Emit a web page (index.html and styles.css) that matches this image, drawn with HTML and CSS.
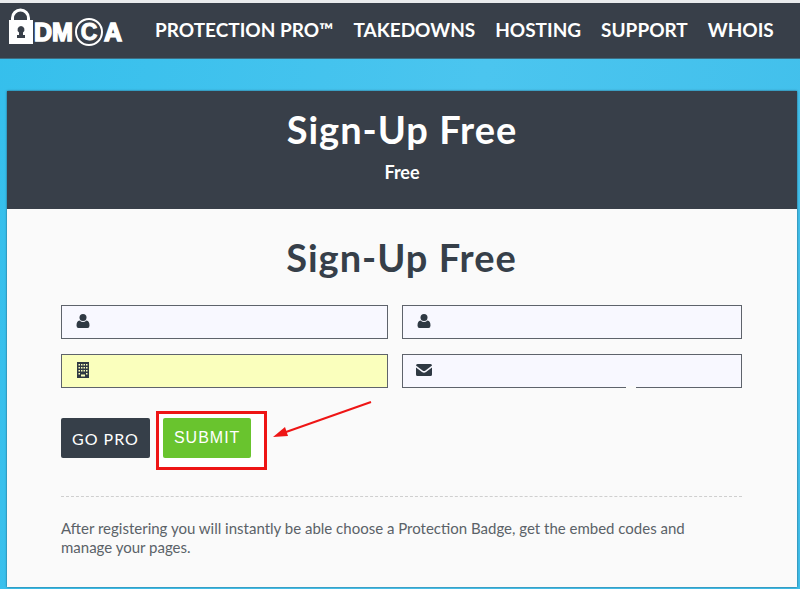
FILE: index.html
```
<!DOCTYPE html>
<html lang="en">

<head>
    <meta charset="utf-8">
    <meta name="viewport" content="width=device-width, initial-scale=1">
    <title>DMCA - Sign-Up Free</title>
    <link rel="stylesheet" href="styles.css">
</head>

<body>
    <header class="topbar">
        <a class="logo" href="#" aria-label="DMCA home">
            <svg width="116" height="40" viewBox="0 2 116 40">
                <path class="logo_shackle" d="M4.500 12V10A8 8 0 0 1 20.500 10V12" />
                <path class="logo_lock" fill-rule="evenodd" d="M1 12H25V36H1ZM13 18A3.600 3.600 0 0 0 11 24.500V27H9V30H17V27H15V24.500A3.600 3.600 0 0 0 13 18Z" />
                <text class="logo_text" x="26" y="33">DM</text>
                <circle class="logo_ring" cx="81" cy="24" r="13" />
                <text class="logo_c" x="81" y="32" text-anchor="middle">C</text>
                <text class="logo_text" x="96" y="33">A</text>
            </svg>
        </a>
        <nav class="menu">
            <a href="#">PROTECTION PRO™</a>
            <a href="#">TAKEDOWNS</a>
            <a href="#">HOSTING</a>
            <a href="#">SUPPORT</a>
            <a href="#">WHOIS</a>
        </nav>
    </header>

    <main class="card">
        <div class="card_head">
            <h1 class="title">Sign-Up Free</h1>
            <p class="plan">Free</p>
        </div>
        <div class="card_body">
            <h2 class="title">Sign-Up Free</h2>
            <form>
                <div class="fields">
                    <label class="field">
                        <svg class="icon" viewBox="0 0 16 16">
                            <circle cx="8" cy="4.500" r="3.500" />
                            <path d="M4.500 7.500Q8 10.500 11.500 7.500Q14.500 8 14.500 12.500Q14.500 15 12.500 15H3.500Q1.500 15 1.500 12.500Q1.500 8 4.500 7.500Z" />
                        </svg>
                        <input type="text" name="first_name" aria-label="First name">
                    </label>
                    <label class="field">
                        <svg class="icon" viewBox="0 0 16 16">
                            <circle cx="8" cy="4.500" r="3.500" />
                            <path d="M4.500 7.500Q8 10.500 11.500 7.500Q14.500 8 14.500 12.500Q14.500 15 12.500 15H3.500Q1.500 15 1.500 12.500Q1.500 8 4.500 7.500Z" />
                        </svg>
                        <input type="text" name="last_name" aria-label="Last name">
                    </label>
                    <label class="field field_filled">
                        <svg class="icon" viewBox="0 0 16 16">
                            <path fill-rule="evenodd" d="M2 0H14V16H2ZM3.500 2V3.500H5V2ZM6 2V3.500H7.500V2ZM8.500 2V3.500H10V2ZM11 2V3.500H12.500V2ZM3.500 5V6.500H5V5ZM6 5V6.500H7.500V5ZM8.500 5V6.500H10V5ZM11 5V6.500H12.500V5ZM3.500 8V9.500H5V8ZM6 8V9.500H7.500V8ZM8.500 8V9.500H10V8ZM11 8V9.500H12.500V8ZM3.500 11V12.500H5V11ZM11 11V12.500H12.500V11ZM6 12.500V14.500H10V12.500Z" />
                        </svg>
                        <input type="text" name="company" aria-label="Company">
                    </label>
                    <label class="field field_email">
                        <svg class="icon" viewBox="0 0 16 16">
                            <path d="M0 3.500Q0 2 1.500 2H14.500Q16 2 16 3.500L9.500 8.500Q8 9.500 6.500 8.500Z" />
                            <path d="M0 5.500L6 10Q8 11.300 10 10L16 5.500V12.500Q16 14 14.500 14H1.500Q0 14 0 12.500Z" />
                        </svg>
                        <input type="email" name="email" aria-label="Email">
                    </label>
                </div>
                <div class="actions">
                    <button type="button" class="button">GO PRO</button>
                    <div class="highlight">
                        <button type="submit" class="button button_submit">SUBMIT</button>
                        <svg class="arrow" width="104" height="44" viewBox="0 0 104 44">
                            <path class="arrow_line" d="M101 4L16 34" />
                            <path class="arrow_head" d="M3 39L15 29L18 38Z" />
                        </svg>
                    </div>
                </div>
            </form>
            <p class="note">After registering you will instantly be able choose a Protection Badge, get the embed codes and manage your pages.</p>
        </div>
    </main>
</body>

</html>
```
FILE: styles.css
```
* {
    box-sizing: border-box;
}

body {
    margin: 0;
    font-family: Lato, "Liberation Sans", sans-serif;
    font-size: 16px;
    color: #363f49;
    background: linear-gradient(100deg, #35bfec, #4bc5ef 55%, #40bfeb);
}

.topbar {
    display: flex;
    align-items: center;
    gap: 31px;
    height: 59px;
    padding: 0 8px 2px;
    background: #383f49;
    border-top: 3px solid #e9ebed;
    border-bottom: 1px solid #3d6d83;
}

.logo {
    flex: none;
    height: 40px;
}

.logo svg {
    display: block;
    overflow: visible;
}

.logo_shackle {
    fill: none;
    stroke: #fff;
    stroke-width: 3;
}

.logo_lock {
    fill: #fff;
}

.logo_text,
.logo_c {
    font-family: "Liberation Sans", sans-serif;
    font-size: 25px;
    font-weight: bold;
    fill: #fff;
    stroke: #fff;
    stroke-width: 1.5;
}

.logo_c {
    font-size: 23px;
    stroke-width: 1;
}

.logo_ring {
    fill: none;
    stroke: #fff;
    stroke-width: 2;
}

.menu {
    display: flex;
    flex-wrap: wrap;
    gap: 20px;
}

.menu a {
    color: #fff;
    font-size: 19px;
    font-weight: bold;
    line-height: 24px;
    text-decoration: none;
}

.card {
    margin: 32px 3px 2px 7px;
    background: #fafafa;
    box-shadow: 0 0 2px #24566c;
}

.card_head {
    padding: 15px 20px 25px;
    text-align: center;
    color: #fff;
    background: #383f49;
}

.title {
    margin: 0;
    font-size: 38px;
    font-weight: bold;
    line-height: 46px;
    letter-spacing: 1px;
    text-align: center;
}

.plan {
    margin: 8px 0 0;
    font-size: 18px;
    font-weight: bold;
    line-height: 24px;
}

.card_body {
    padding: 25px 55px 30px 54px;
}

.fields {
    display: grid;
    grid-template-columns: 24fr 25fr;
    gap: 15px 14px;
    margin-top: 25px;
}

.field {
    position: relative;
    display: flex;
    align-items: center;
    gap: 12px;
    height: 34px;
    padding: 0 12px 2px 13px;
    background: #f8f8ff;
    border: 1px solid #5e636b;
}

.field_filled {
    background: #faffbd;
}

/* break in the bottom border */
.field_email::after {
    content: "";
    position: absolute;
    right: 31%;
    bottom: -1px;
    width: 10px;
    height: 2px;
    background: #fafafa;
}

.field input {
    flex: 1;
    min-width: 0;
    padding: 0;
    font: inherit;
    color: inherit;
    background: none;
    border: none;
    outline: none;
}

.icon {
    flex: none;
    width: 16px;
    height: 16px;
    fill: #2f3943;
}

.actions {
    display: flex;
    align-items: flex-start;
    gap: 6px;
    margin-top: 23px;
}

.button {
    height: 40px;
    padding: 0 11px;
    font-family: inherit;
    font-size: 16px;
    letter-spacing: 1px;
    color: #fff;
    background: #363f49;
    border: none;
    border-radius: 2px;
}

.actions > .button {
    margin-top: 7px;
}

.button_submit {
    font-family: "Liberation Sans", sans-serif;
    background: #69c42e;
}

.highlight {
    position: relative;
    padding: 4px 13px 9px 4px;
    background: #fff;
    border: 3px solid #ee1515;
}

.arrow {
    position: absolute;
    left: 111px;
    top: -16px;
}

.arrow_line {
    stroke: #ee1515;
    stroke-width: 2;
}

.arrow_head {
    fill: #ee1515;
}

.note {
    margin: 26px 0 0;
    padding: 22px 20px 0 0;
    font-size: 15px;
    line-height: 19px;
    color: #5b6268;
    border-top: 1px dashed #cfcfcf;
}
```
